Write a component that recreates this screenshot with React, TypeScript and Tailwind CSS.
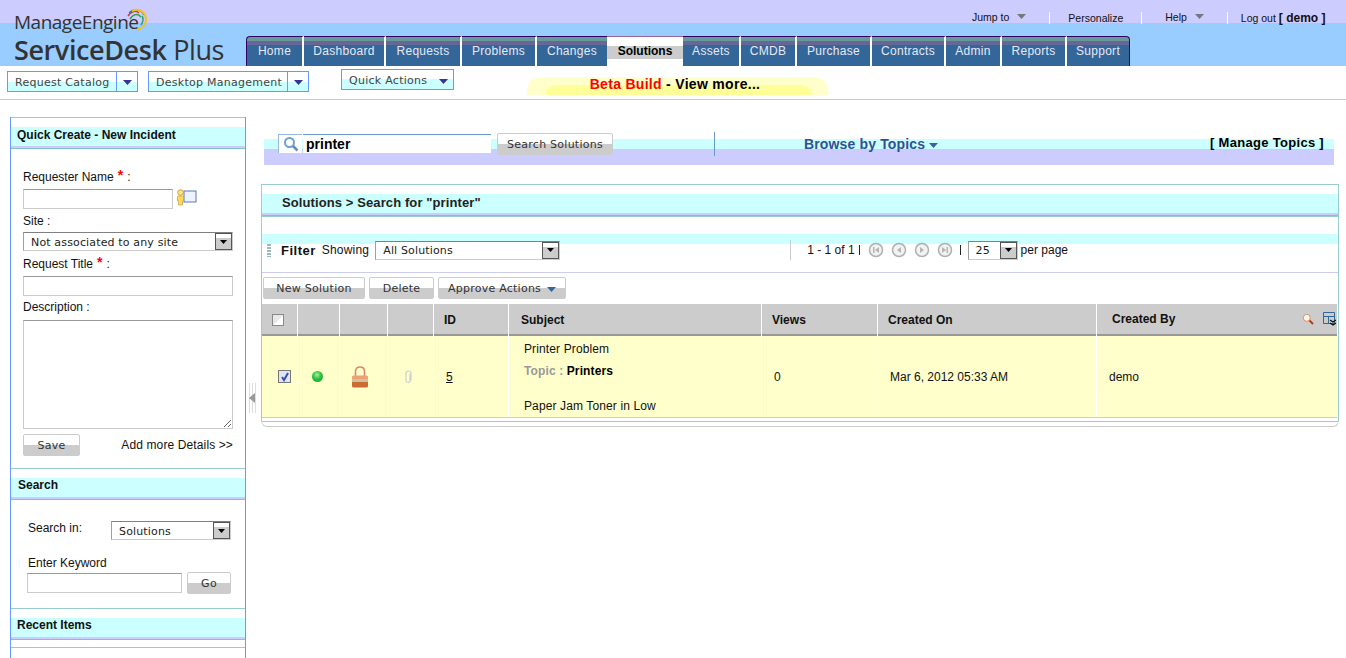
import React from "react";

const TABS = [
  { name: "Home", w: "w-[58px]" },
  { name: "Dashboard", w: "w-[82px]" },
  { name: "Requests", w: "w-[76px]" },
  { name: "Problems", w: "w-[75px]" },
  { name: "Changes", w: "w-[70px]" },
  { name: "Solutions", w: "w-[76px]", active: true },
  { name: "Assets", w: "w-[58px]" },
  { name: "CMDB", w: "w-[56px]" },
  { name: "Purchase", w: "w-[75px]" },
  { name: "Contracts", w: "w-[74px]" },
  { name: "Admin", w: "w-[56px]" },
  { name: "Reports", w: "w-[65px]" },
  { name: "Support", w: "w-[63px]" },
];

const Caret = ({ className = "" }: { className?: string }) => (
  <svg width="9" height="5" viewBox="0 0 9 5" className={className}>
    <path d="M0 0h9L4.5 5z" fill="currentColor" />
  </svg>
);

// two tone toolbar button, white over grey
function Btn({ children, className = "" }: { children: React.ReactNode; className?: string }) {
  return (
    <button className={`flex h-[22px] items-center justify-center rounded-[2px] border border-[#cccccc] bg-[linear-gradient(#ffffff_50%,#cccccc_50%)] pt-[3px] font-['DejaVu_Sans',sans-serif] text-[11px] tracking-[0.25px] text-[#333333] ${className}`}>
      {children}
    </button>
  );
}

function FakeSelect({ value, className = "" }: { value: string; className?: string }) {
  return (
    <div className={`flex h-[19px] items-center justify-between border border-[#cccccc] border-t-[#808080] border-l-[#a0a0a0] bg-white pl-[7px] font-['DejaVu_Sans',sans-serif] text-[11px] tracking-[0.15px] text-[#222222] ${className}`}>
      <span className="pt-[3px]">{value}</span>
      <span className="flex h-[17px] w-[17px] items-center justify-center border border-[#555555] bg-[linear-gradient(#ffffff_30%,#cccccc_30%)] text-black">
        <svg width="7" height="4" viewBox="0 0 7 4"><path d="M0 0h7L3.5 4z" fill="currentColor" /></svg>
      </span>
    </div>
  );
}

function TextBox({ className = "" }: { className?: string }) {
  return <input type="text" className={`h-[20px] border border-[#cccccc] border-t-[#999999] bg-white ${className}`} />;
}

// white gap, cyan title strip, lavender and teal rules
function SectionHead({ title, className = "" }: { title: string; className?: string }) {
  return (
    <div className="border-t border-[#99cccc]">
      <div className="h-[9px]" />
      <div className={`h-[21px] border-b-2 border-[#ccccff] bg-[#ccffff] text-[12px] leading-[14px] font-bold text-[#111111] ${className}`}>{title}</div>
      <div className="h-px bg-[#7fc4c8]" />
    </div>
  );
}

function Star() {
  return <span className="mx-[4px] align-[1px] text-[14px] leading-[10px] font-bold text-[#ff0000]">*</span>;
}

function PagerIcon({ d }: { d: string }) {
  return (
    <svg width="16" height="16" viewBox="0 0 16 16">
      <circle cx="8" cy="8" r="6.5" fill="#f2f2f2" stroke="#b0b0b0" strokeWidth="1.5" />
      <path d={d} fill="#b5b5b5" />
    </svg>
  );
}

function ManageEngineArcs() {
  return (
    <svg width="22" height="24" viewBox="0 0 22 24" fill="none" strokeWidth="1.5" className="absolute top-[8px] left-[126px]">
      <path d="M2 8C5 3 10 2 13 5" stroke="#d9352a" />
      <path d="M4 11C7 6 12 5 15 9" stroke="#2f9e44" />
      <path d="M3 5C8 0 15 1 18 7" stroke="#1f7fc4" />
      <path d="M6 3C12 0 20 3 20 12C20 17 16 20 11 22" stroke="#f0c419" strokeWidth="2" />
      <path d="M16 8C18 11 17 14 15 17" stroke="#2a9d8f" />
    </svg>
  );
}

function Lock() {
  return (
    <svg width="18" height="22" viewBox="0 0 18 22">
      <path d="M4.500 11V5.500C4.500 2.500 6.500 1 9 1s4.500 1.500 4.500 4.500V11" fill="none" stroke="#d98a63" strokeWidth="1.600" />
      <path d="M1 11q0-1.500 1.500-1.500h13Q17 9.500 17 11v3H1z" fill="#eda178" />
      <rect x="1" y="13" width="16" height="3" fill="#c9c79a" />
      <path d="M1 16h16v4q0 1.500-1.500 1.500h-13Q1 21.500 1 20z" fill="#cc6b33" />
    </svg>
  );
}

export default function App() {
  return (
    <div className="h-[658px] w-[1346px] overflow-hidden bg-white font-['Liberation_Sans',Arial,sans-serif] text-[12px] text-[#111111]">
      {/* top header */}
      <div className="flex h-[66px] bg-[linear-gradient(#ccccff_23px,#99ccff_23px)]">
        <div className="relative w-[246px] pl-[14px] font-['Open_Sans',sans-serif] text-[#333333]">
          <div className="pt-[9px] text-[19px] leading-[26px] tracking-[-0.5px]">ManageEngine</div>
          <div className="text-[27px] leading-[30px] font-semibold tracking-[-0.4px]">
            ServiceDesk <span className="font-normal">Plus</span>
          </div>
          <ManageEngineArcs />
        </div>
        <div className="flex flex-col">
          <div className="flex h-[36px] items-start pt-[10px] text-[10.5px] leading-[14px] text-[#111111]">
            <span className="ml-[726px]">Jump to</span>
            <Caret className="mt-[4px] ml-[8px] text-[#777777]" />
            <span className="mt-[2px] ml-[23px] h-[12px] w-px bg-white" />
            <span className="mt-[1px] ml-[18px]">Personalize</span>
            <span className="mt-[2px] ml-[18px] h-[12px] w-px bg-white" />
            <span className="ml-[23px]">Help</span>
            <Caret className="mt-[4px] ml-[8px] text-[#777777]" />
            <span className="mt-[2px] ml-[23px] h-[12px] w-px bg-white" />
            <span className="mt-[1px] ml-[13px]">
              Log out <b className="text-[12px]">[ demo ]</b>
            </span>
          </div>
          <div className="flex h-[30px]">
            {TABS.map((t, i) => (
              <div
                key={t.name}
                className={`flex items-center justify-center pb-[2px] text-[12px] tracking-[0.3px] ${t.w} ${
                  t.active
                    ? "border-t border-[#996699] bg-[linear-gradient(#ffffff_9px,#cccccc_9px,#cccccc_22px,#ffffff_22px)] font-bold tracking-normal text-black"
                    : "border-t border-[#330066] bg-[linear-gradient(#669999_4px,#666699_4px,#666699_8px,#336699_8px)] text-[#e8e8f4]"
                } ${!t.active && i < TABS.length - 1 && !TABS[i + 1].active ? "border-r-2 border-r-white" : ""} ${i === 0 ? "rounded-tl-[4px] border-l border-l-[#330066]" : ""} ${
                  i === TABS.length - 1 ? "rounded-tr-[4px] border-r border-r-[#330066]" : ""
                }`}
              >
                <span>{t.name}</span>
              </div>
            ))}
          </div>
        </div>
      </div>

      {/* sub bar */}
      <div className="flex h-[34px] border-b border-[#cccccc] pl-[7px] font-['DejaVu_Sans',sans-serif] text-[11px] tracking-[0.27px] text-[#444444]">
        <div className="mt-[5px] flex h-[21px] w-[131px] border border-[#6699ff] bg-[linear-gradient(#ffffff_50%,#ccffff_50%)]">
          <span className="flex flex-1 items-center pt-[3px] pl-[7px]">Request Catalog</span>
          <span className="flex w-[21px] items-center justify-center border-l border-[#6699ff] pt-[2px] text-[#333399]"><Caret /></span>
        </div>
        <div className="mt-[5px] ml-[10px] flex h-[21px] w-[161px] border border-[#6699ff] bg-[linear-gradient(#ffffff_50%,#ccffff_50%)]">
          <span className="flex flex-1 items-center pt-[3px] pl-[7px]">Desktop Management</span>
          <span className="flex w-[21px] items-center justify-center border-l border-[#6699ff] pt-[2px] text-[#333399]"><Caret /></span>
        </div>
        <div className="mt-[3px] ml-[32px] flex h-[21px] w-[113px] items-center justify-between border border-[#6699ff] bg-[linear-gradient(#ffffff_50%,#ccffff_50%)] pt-[3px] pr-[5px] pl-[7px]">
          Quick Actions
          <Caret className="text-[#333399]" />
        </div>
        <div className="relative mt-[11px] ml-[73px] flex h-[18px] w-[301px] justify-center rounded-t-[14px] bg-[#ffffcc] pr-[5px] font-['Liberation_Sans',sans-serif] text-[14px] leading-[15px] font-bold tracking-[0.3px] text-black">
          <div className="absolute right-[16px] bottom-0 left-[18px] h-[10px] rounded-t-[10px] bg-[#ffff99]" />
          <span className="relative">
            <span className="text-[#ff0000]">Beta Build</span> - View more...
          </span>
        </div>
      </div>

      <div className="flex h-[558px] pl-[10px]">
        {/* left column */}
        <div className="mt-[17px] w-[236px] border-x border-[#6699ff]">
          <SectionHead title="Quick Create - New Incident" className="pl-[6px] pt-[1px]" />
          <div className="flex h-[319px] flex-col px-[12px]">
            <label className="mt-[21px] leading-[14px]">Requester Name<Star />:</label>
            <div className="mt-[5px] flex items-start">
              <TextBox className="w-[150px]" />
              <svg width="21" height="17" viewBox="0 0 21 17" className="ml-[3px]">
                <rect x="8" y="2" width="12" height="11" fill="#eef2fb" stroke="#5a78b5" />
                <circle cx="4.500" cy="3.500" r="2.800" fill="#ffe38a" stroke="#c9a43c" />
                <path d="M1.500 7h6v5H6.500v4h-4v-4h-1z" fill="#ffd95e" stroke="#c9a43c" strokeWidth=".7" />
              </svg>
            </div>
            <label className="mt-[5px] leading-[14px]">Site :</label>
            <FakeSelect value="Not associated to any site" className="mt-[4px] w-[210px]" />
            <label className="mt-[6px] leading-[14px]">Request Title<Star />:</label>
            <TextBox className="mt-[5px] w-[210px]" />
            <label className="mt-[4px] leading-[14px]">Description :</label>
            <textarea className="mt-[6px] h-[109px] w-[210px] border border-[#cccccc] border-t-[#999999] bg-white" />
            <div className="mt-[5px] flex items-center justify-between">
              <Btn className="w-[57px]">Save</Btn>
              <span className="tracking-[0.12px]">Add more Details &gt;&gt;</span>
            </div>
          </div>

          <SectionHead title="Search" className="pl-[7px] pt-[0px]" />
          <div className="flex h-[108px] flex-col pr-[13px] pl-[16px]">
            <div className="mt-[21px] flex items-start">
              <span className="ml-[1px] w-[83px] shrink-0 leading-[14px]">Search in:</span>
              <FakeSelect value="Solutions" className="w-[120px]" />
            </div>
            <span className="mt-[16px] ml-[1px] leading-[14px]">Enter Keyword</span>
            <div className="mt-[2px] flex items-center">
              <TextBox className="w-[155px] shrink-0" />
              <Btn className="ml-[5px] w-[44px] shrink-0">Go</Btn>
            </div>
          </div>

          <SectionHead title="Recent Items" className="pl-[6px] pt-[0px]" />
          <div className="mt-[7px] border-t border-[#99cccc]" />
        </div>

        {/* splitter */}
        <div className="w-[15px] pt-[283px] pl-[3px]">
          <div className="flex h-[30px] w-[7px] items-center justify-center bg-[repeating-linear-gradient(90deg,#dddddd_0,#dddddd_1px,#ffffff_1px,#ffffff_3px)]">
            <svg width="7" height="10" viewBox="0 0 7 10"><path d="M6 0v10L0 5z" fill="#999999" /></svg>
          </div>
        </div>

        {/* main */}
        <div className="w-[1078px]">
          <div className="mt-[33px] ml-[3px] flex h-[32px] w-[1070px] items-start bg-[linear-gradient(transparent_6px,#ccffff_6px,#ccffff_16px,#ccccff_16px)] pl-[14px]">
            <div className="mt-[1px] flex h-[19px] w-[24px] items-center justify-center border-t border-l border-[#99b8dd] bg-white">
              <svg width="16" height="16" viewBox="0 0 16 16" fill="none">
                <circle cx="6.500" cy="6.500" r="4.500" stroke="#6f9fd0" strokeWidth="2" />
                <path d="M10 10l4.500 4.500" stroke="#5f8fb8" strokeWidth="2.500" />
              </svg>
            </div>
            <input
              readOnly
              value="printer"
              className="mt-[1px] ml-px h-[19px] w-[188px] border-t border-[#6699cc] bg-white pl-[3px] text-[14px] font-bold text-black outline-none"
            />
            <Btn className="ml-[6px] h-[20px] w-[116px] tracking-[0.3px]">Search Solutions</Btn>
            <span className="-mt-px ml-[101px] h-[24px] w-px bg-[#6699cc]" />
            <span className="mt-[3px] ml-[89px] flex items-center text-[14px] leading-[16px] font-bold tracking-[0.15px] text-[#334f96]">
              Browse by Topics
              <Caret className="mt-[2px] ml-[4px] text-[#336699]" />
            </span>
            <span className="mt-[2px] ml-auto pr-[10px] text-[13px] leading-[15px] font-bold tracking-[0.3px] text-black">[ Manage Topics ]</span>
          </div>

          <div className="mt-[19px]">
            <div className="border-x border-[#99cccc]">
              <div className="border-t border-[#99cccc]">
                <div className="h-[9px]" />
                <div className="h-[21px] border-b-2 border-[#ccccff] bg-[#ccffff] pt-[1px] pl-[20px] text-[13px] leading-[15px] font-bold tracking-[0.1px] text-[#222222]">
                  Solutions &gt; Search for "printer"
                </div>
                <div className="h-px bg-[#7fc4c8]" />
                <div className="h-px bg-[#99cccc]" />
              </div>

              {/* filter row */}
              <div className="flex h-[56px] items-center border-b border-[#ccccee] bg-[linear-gradient(transparent_17px,#ccffff_17px,#ccffff_27px,transparent_27px)] pt-[11px]">
                <span className="ml-[5px] h-[13px] w-[4px] bg-[repeating-linear-gradient(#99bbbb_0,#99bbbb_2px,transparent_2px,transparent_3px)]" />
                <b className="ml-[10px] pt-[1px] text-[13px] tracking-[0.5px]">Filter</b>
                <span className="mb-[1px] ml-[6px] tracking-[0.2px]">Showing</span>
                <FakeSelect value="All Solutions" className="ml-[6px] w-[185px] shrink-0 border-[#808080]" />
                <span className="ml-[230px] h-[20px] w-px bg-[#cccccc]" />
                <span className="ml-[16px] mb-[1px]">1 - 1 of 1</span>
                <span className="ml-[4px] h-[10px] w-px bg-[#222222]" />
                <span className="ml-[8px] flex gap-[7px]">
                  <PagerIcon d="M5 5h1.500v6H5zM11 5v6L7 8z" />
                  <PagerIcon d="M10 5v6L6 8z" />
                  <PagerIcon d="M6 5v6l4-3z" />
                  <PagerIcon d="M9.500 5H11v6H9.500zM5 5v6l4-3z" />
                </span>
                <span className="ml-[7px] h-[10px] w-px bg-[#222222]" />
                <FakeSelect value="25" className="ml-[7px] w-[50px]" />
                <span className="ml-[3px]">per page</span>
              </div>

              {/* actions */}
              <div className="flex h-[31px] gap-[4px] pt-[4px] pl-px">
                <Btn className="w-[102px]">New Solution</Btn>
                <Btn className="w-[65px]">Delete</Btn>
                <Btn className="w-[128px] gap-[6px]">
                  Approve Actions
                  <Caret className="text-[#336699]" />
                </Btn>
              </div>

              {/* results table */}
              <div className="w-[1075px]">
                <div className="grid h-[32px] grid-cols-[36px_42px_48px_46px_75px_253px_116px_219px_240px] border-b-2 border-[#999999] bg-[#cccccc] text-[12px] leading-[32px] font-bold text-[#111111]">
                  <div className="flex items-center justify-center border-r border-white pr-[4px]">
                    <span className="h-[12px] w-[12px] border border-[#888888] bg-[linear-gradient(135deg,#e8e8e8_50%,#ffffff_50%)]" />
                  </div>
                  <div className="border-r border-white" />
                  <div className="border-r border-white" />
                  <div className="border-r border-white" />
                  <div className="border-r border-white pl-[10px]">ID</div>
                  <div className="border-r border-white pl-[12px]">Subject</div>
                  <div className="border-r border-white pl-[10px]">Views</div>
                  <div className="border-r border-white pl-[10px]">Created On</div>
                  <div className="relative flex justify-between pr-[1px] pl-[15px] leading-[30px]">
                    Created By
                    <span className="mt-[8px] flex h-[14px] items-start gap-[9px]">
                      <svg width="12" height="12" viewBox="0 0 12 12" fill="none" className="mt-[1px]">
                        <circle cx="4.800" cy="4.800" r="3.500" fill="#fff6e8" stroke="#d9906a" />
                        <path d="M7.500 7.500L11 11" stroke="#a83c1c" strokeWidth="1.800" />
                      </svg>
                      <svg width="13" height="14" viewBox="0 0 13 14" fill="none">
                        <path d="M.5.5h11v11H.5zM.5 4.500h11M5.500 4.500v7" stroke="#336699" />
                        <path d="M7 8l3 2 3-2M7 11l3 2 3-2" stroke="#111111" strokeWidth="1.300" />
                      </svg>
                    </span>
                  </div>
                </div>
                <div className="grid h-[82px] grid-cols-[36px_42px_48px_46px_75px_253px_116px_219px_240px] border-b border-[#cccccc] bg-[#ffffcc] text-[12px]">
                  <div className="flex items-center justify-center border-r border-white pl-[10px]">
                    <span className="flex h-[13px] w-[13px] items-center justify-center border border-[#777777] bg-[#e4e4ee]">
                      <svg width="10" height="10" viewBox="0 0 10 10" fill="none"><path d="M2 5l2 3 4-7" stroke="#2f55b0" strokeWidth="2" /></svg>
                    </span>
                  </div>
                  <div className="flex items-center justify-center border-r border-white pr-[2px]">
                    <span className="h-[11px] w-[11px] rounded-full bg-[radial-gradient(circle_at_45%_35%,#a8f0a8,#2fbf3a_45%,#1c9c2a)]" />
                  </div>
                  <div className="flex items-center justify-center border-r border-white pr-[8px]"><Lock /></div>
                  <div className="flex items-center justify-center border-r border-white pr-[4px]">
                    <svg width="9" height="14" viewBox="0 0 9 14" fill="none">
                      <path d="M6.500 3.500V10a2 2 0 0 1-4 0V3a2.500 2.500 0 0 1 5 0v7" stroke="#cfcfcf" strokeWidth="1.200" transform="translate(-.5 .5)" />
                    </svg>
                  </div>
                  <div className="flex items-center border-r border-white pl-[12px]"><a className="underline">5</a></div>
                  <div className="relative border-r border-white pl-[15px] leading-[14px] tracking-[0.12px]">
                    <div className="mt-[6px]">Printer Problem</div>
                    <div className="mt-[8px] font-bold text-black"><span className="text-[#999999]">Topic : </span>Printers</div>
                    <div className="mt-[21px]">Paper Jam Toner in Low</div>
                  </div>
                  <div className="flex items-center border-r border-white pl-[12px]">0</div>
                  <div className="flex items-center border-r border-white pl-[12px]">Mar 6, 2012 05:33 AM</div>
                  <div className="flex items-center pl-[12px]">demo</div>
                </div>
              </div>
              <div className="h-[3px]" />
            </div>
            <div className="h-[6px] rounded-b-[6px] border-x border-t border-b border-t-[#99cccc] border-r-[#dddddd] border-b-[#cccccc] border-l-[#dddddd]" />
          </div>
        </div>
      </div>
    </div>
  );
}
